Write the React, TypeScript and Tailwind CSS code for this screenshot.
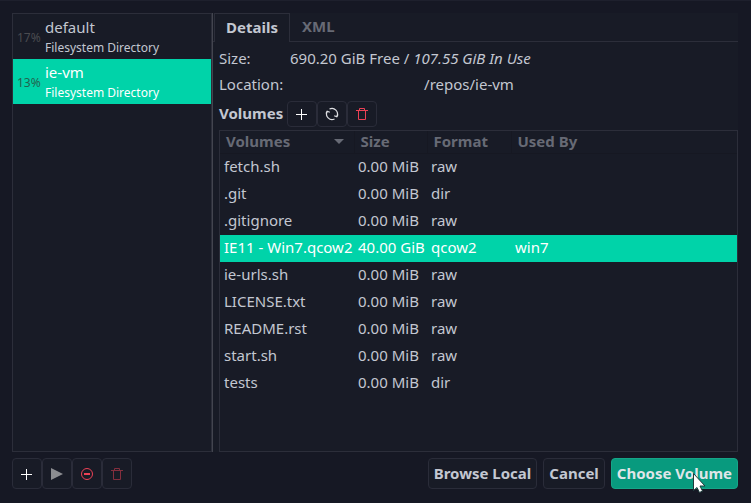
import { useState } from "react";
import type { ReactNode } from "react";

const pools = [
  { name: "default", kind: "Filesystem Directory", used: "17%" },
  { name: "ie-vm", kind: "Filesystem Directory", used: "13%" },
];

const volumes = [
  { name: "fetch.sh", size: "0.00 MiB", format: "raw", usedBy: "" },
  { name: ".git", size: "0.00 MiB", format: "dir", usedBy: "" },
  { name: ".gitignore", size: "0.00 MiB", format: "raw", usedBy: "" },
  { name: "IE11 - Win7.qcow2", size: "40.00 GiB", format: "qcow2", usedBy: "win7" },
  { name: "ie-urls.sh", size: "0.00 MiB", format: "raw", usedBy: "" },
  { name: "LICENSE.txt", size: "0.00 MiB", format: "raw", usedBy: "" },
  { name: "README.rst", size: "0.00 MiB", format: "raw", usedBy: "" },
  { name: "start.sh", size: "0.00 MiB", format: "raw", usedBy: "" },
  { name: "tests", size: "0.00 MiB", format: "dir", usedBy: "" },
];

function PlusIcon() {
  return (
    <svg width="16" height="16" viewBox="0 0 16 16" fill="none" stroke="#ffffff" aria-hidden="true">
      <path d="M7.5 3v11M2 8.500h11" />
    </svg>
  );
}

function RefreshIcon() {
  return (
    <svg width="16" height="16" viewBox="0 0 16 16" fill="none" stroke="#dfe0e4" strokeWidth="1.2" aria-hidden="true">
      <path d="M5.500 3A5.500 5.500 0 0 1 12.800 10.500M10.500 13A5.500 5.500 0 0 1 3.200 5.500" />
      <path d="M10.200 9.800l2.600 1 1.200-2.400M2 7.600l1.200-2.400 2.600 1" />
    </svg>
  );
}

function TrashIcon() {
  return (
    <svg width="16" height="16" viewBox="0 0 16 16" fill="none" stroke="#ed4155" aria-hidden="true">
      <path d="M2 4.500h12M5.500 4V2.500h5V4M4.500 5v8.500h7V5" />
    </svg>
  );
}

function PlayIcon() {
  return (
    <svg width="16" height="16" viewBox="0 0 16 16" fill="#8b8c90" aria-hidden="true">
      <path d="M2 2l12 6-12 6z" />
    </svg>
  );
}

function StopIcon() {
  return (
    <svg width="16" height="16" viewBox="0 0 16 16" fill="none" stroke="#ed4155" aria-hidden="true">
      <circle cx="8" cy="8" r="5.500" />
      <path d="M5 8h6" strokeWidth="2" />
    </svg>
  );
}

function ToolButton({ label, tall, dim, children }: { label: string; tall?: boolean; dim?: boolean; children: ReactNode }) {
  return (
    <button
      type="button"
      aria-label={label}
      className={`flex w-[30px] items-center justify-center rounded border border-[#2a2c39] bg-[#181b26] ${tall ? "h-[31px]" : "h-[26px]"}`}
    >
      <span className={dim ? "opacity-50" : ""}>{children}</span>
    </button>
  );
}

export default function App() {
  const [pool, setPool] = useState("ie-vm");
  const [volume, setVolume] = useState("IE11 - Win7.qcow2");

  return (
    <div className="flex h-screen flex-col border-t border-[#1e202d] bg-[#161824] pt-3 pr-[13px] pb-[14px] pl-3 font-['Noto_Sans',sans-serif] text-[15px] leading-5 text-[#c3c7d1]">
      <main className="flex min-h-0 flex-1">
        <nav aria-label="Storage pools" className="w-[200px] shrink-0 border border-[#2c2e3a] bg-[#181b26]">
          {pools.map((p) => {
            const on = p.name === pool;
            return (
              <button
                key={p.name}
                type="button"
                onClick={() => setPool(p.name)}
                className={`flex h-[45px] w-full items-center gap-1 pt-[2px] pl-1 text-left ${on ? "bg-[#00d3a9] text-white" : ""}`}
              >
                <span className={`w-6 text-[12px] ${on ? "text-[#22644f]" : "text-[#4a4b50]"}`}>{p.used}</span>
                <span className="flex flex-col gap-px">
                  <span className="leading-5">{p.name}</span>
                  <span className="text-[12px] leading-5">{p.kind}</span>
                </span>
              </button>
            );
          })}
        </nav>

        <section className="flex min-w-0 flex-1 flex-col border-l border-[#43454f] bg-[#181b26]">
          <div role="tablist" className="flex h-[29px] font-bold">
            <div className="w-px border-b border-[#2c2e3a]" />
            <button type="button" role="tab" aria-selected="true" className="w-[76px] border-x border-t border-[#2c2e3a] pb-[2px]">
              Details
            </button>
            <button type="button" role="tab" aria-selected="false" className="flex-1 border-b border-[#2c2e3a] pb-[2px] pl-3 text-left text-[#676a75]">
              XML
            </button>
          </div>

          <div role="tabpanel" className="flex min-h-0 flex-1 flex-col pl-[6px]">
            <dl className="pt-[3px]">
              <div className="flex h-[26px] items-center">
                <dt className="w-[71px]">Size:</dt>
                <dd>
                  690.20 GiB Free / <i>107.55 GiB In Use</i>
                </dd>
              </div>
              <div className="flex h-[26px] items-center">
                <dt className="w-[71px]">Location:</dt>
                <dd className="w-[358px] text-center">/repos/ie-vm</dd>
              </div>
            </dl>

            <div className="mt-1 mb-[3px] flex items-center">
              <h2 className="w-[68px] pb-[2px] font-bold">Volumes</h2>
              <ToolButton label="New volume"><PlusIcon /></ToolButton>
              <ToolButton label="Refresh volume list"><RefreshIcon /></ToolButton>
              <ToolButton label="Delete volume"><TrashIcon /></ToolButton>
            </div>

            <div className="min-h-0 flex-1 border border-[#2c2e3a]">
              <table className="w-full table-fixed border-collapse text-left">
                <colgroup>
                  <col className="w-[134px]" />
                  <col className="w-[73px]" />
                  <col className="w-[84px]" />
                  <col />
                </colgroup>
                <thead className="text-[#676a75]">
                  <tr className="h-[22px] border-b border-[#161822]">
                    <th className="border-r border-[#161822] px-[6px] pt-0 pb-[2px]">
                      <span className="flex items-center justify-between">
                        Volumes
                        <svg width="16" height="6" viewBox="0 0 16 6" fill="#676a75" aria-hidden="true">
                          <path d="M2 1h10L7 6z" />
                        </svg>
                      </span>
                    </th>
                    <th className="border-r border-[#161822] px-[6px] pt-0 pb-[2px]">Size</th>
                    <th className="border-r border-[#161822] px-[6px] pt-0 pb-[2px]">Format</th>
                    <th className="px-[6px] pt-0 pb-[2px]">Used By</th>
                  </tr>
                </thead>
                <tbody>
                  {volumes.map((v) => (
                    <tr
                      key={v.name}
                      onClick={() => setVolume(v.name)}
                      className={`h-[27px] whitespace-nowrap ${v.name === volume ? "bg-[#00d3a9] text-white" : ""}`}
                    >
                      <td className="pt-0 pb-[2px] pl-1">{v.name}</td>
                      <td className="pt-0 pb-[2px] pl-1">{v.size}</td>
                      <td className="pt-0 pb-[2px] pl-1">{v.format}</td>
                      <td className="pt-0 pb-[2px] pl-1">{v.usedBy}</td>
                    </tr>
                  ))}
                </tbody>
              </table>
            </div>
          </div>
        </section>
      </main>

      <footer className="mt-[6px] flex justify-between">
        <div className="flex">
          <ToolButton label="Add pool" tall><PlusIcon /></ToolButton>
          <ToolButton label="Start pool" tall><PlayIcon /></ToolButton>
          <ToolButton label="Stop pool" tall><StopIcon /></ToolButton>
          <ToolButton label="Delete pool" tall dim><TrashIcon /></ToolButton>
        </div>
        <div className="flex gap-[6px] font-bold">
          <button type="button" className="h-[31px] rounded border border-[#2a2c39] bg-[#181b26] px-[5px] pb-[2px]">Browse Local</button>
          <button type="button" className="h-[31px] rounded border border-[#2a2c39] bg-[#181b26] px-[5px] pb-[2px]">Cancel</button>
          <button type="button" className="relative h-[31px] rounded border border-[#16a588] bg-[#089a7e] px-[5px] pb-[2px] text-[#dfe5e8]">
            Choose Volume
            <svg className="absolute top-[13px] right-[30px]" width="15" height="22" viewBox="0 0 15 22" aria-hidden="true">
              <path d="M1.500 1.500v17l3.500-3 2.500 5 3-1.500-2.500-5h5z" fill="#ffffff" stroke="#1d3b3b" />
            </svg>
          </button>
        </div>
      </footer>
    </div>
  );
}
